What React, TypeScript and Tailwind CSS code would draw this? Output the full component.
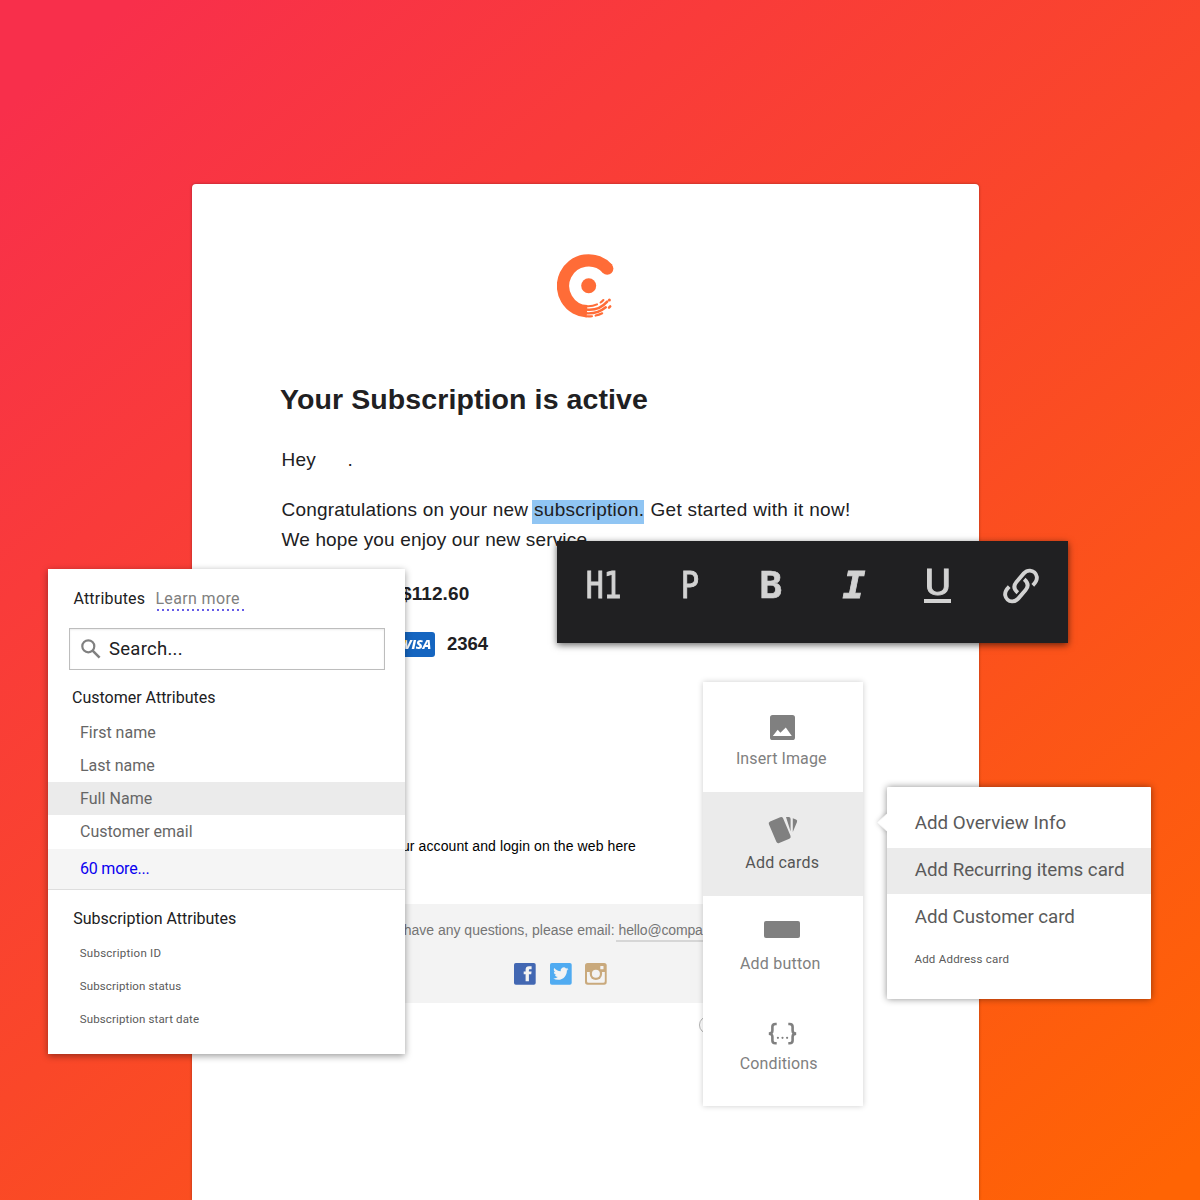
import React from "react";

function BrandMark() {
  return (
    <svg width="57" height="64" viewBox="0 0 57 64" fill="none" stroke="#ff6c37" className="mx-auto block">
      <path d="M30 57.3A25.5 25.5 0 1 1 50.4 14.7" strokeWidth="12.4" />
      <circle cx="50.2" cy="14.6" r="6.2" fill="#ff6c37" stroke="none" />
      <circle cx="31.7" cy="31.7" r="7.5" fill="#ff6c37" stroke="none" />
      <g strokeWidth="2.1" strokeLinecap="round">
        <path d="M28 52A20.6 20.6 0 0 0 40 50.4" />
        <path d="M43.6 48.5A20.6 20.6 0 0 0 46.4 46" />
        <path d="M29 55.6A24.2 24.2 0 0 0 50.2 47.6" strokeWidth="2.5" />
        <path d="M52.4 46v0.1" strokeWidth="3" />
        <path d="M29 59.3A27.6 27.6 0 0 0 48.8 53.2" strokeWidth="2.4" />
        <path d="M52 53.6l1.2-1.2" strokeWidth="2.5" />
        <path d="M29 62.3A30.6 30.6 0 0 0 35 62.2" />
        <path d="M38.6 61.6A30.6 30.6 0 0 0 45.2 59.3" />
      </g>
    </svg>
  );
}

function SearchIcon() {
  return (
    <svg width="20" height="20" viewBox="0 0 20 20" fill="none" stroke="#808080" strokeWidth="2.2">
      <circle cx="7.3" cy="7.3" r="6" />
      <path d="M11.6 11.6L18.6 18.6" strokeWidth="2.6" />
    </svg>
  );
}

function LinkIcon() {
  return (
    <svg width="40" height="40" viewBox="0 0 40 40" fill="none" stroke="#d2d2d2" strokeWidth="3.9">
      <path d="M8.2 20.6C5.6 23.2 3.6 25.4 4.2 29.2C4.8 32.6 7.6 35.2 11 35.4C13.6 35.5 15.6 34.4 17.2 32.6L24.6 24C27.6 20.4 27.2 16.6 23.2 13.2" />
      <path d="M31.8 19.4C34.4 16.8 36.4 14.6 35.8 10.8C35.2 7.4 32.4 4.8 29 4.6C26.4 4.5 24.4 5.6 22.8 7.4L15.4 16C12.4 19.6 12.8 23.4 16.8 26.8" />
    </svg>
  );
}

function ImageIcon() {
  return (
    <svg width="25" height="25" viewBox="0 0 25 25">
      <rect width="25" height="25" rx="2.6" fill="#808080" />
      <path d="M2.8 21L7.7 14.7L10.4 17.8L15.8 12.6L21.8 21Z" fill="#fff" />
    </svg>
  );
}

function CardsIcon() {
  return (
    <svg width="30" height="28" viewBox="0 0 30 28" fill="#808080">
      <rect x="4" y="2.4" width="15.4" height="23.4" rx="2.2" transform="rotate(-23 11.7 14.1)" />
      <path d="M18 0.9h2.4a2 2 0 0 1 2.2 2v12.6z" />
      <path d="M24.8 2.3l3.2 1.3a1.9 1.9 0 0 1 1 2.5L24.8 16z" />
    </svg>
  );
}

function BracesIcon() {
  return (
    <svg width="29" height="23" viewBox="0 0 29 23" fill="none" stroke="#808080" strokeWidth="2.6">
      <path d="M8.7 2H7.3C5.4 2 4.4 3 4.4 4.8V8.4C4.4 10.4 3.2 11.6 0.8 11.6C3.2 11.6 4.4 12.8 4.4 14.8V18.4C4.4 20.2 5.4 21.2 7.3 21.2H8.7" />
      <path d="M20.3 2H21.7C23.6 2 24.6 3 24.6 4.8V8.4C24.6 10.4 25.8 11.6 28.2 11.6C25.8 11.6 24.6 12.8 24.6 14.8V18.4C24.6 20.2 23.6 21.2 21.7 21.2H20.3" />
      <g fill="#808080" stroke="none">
        <circle cx="9.9" cy="15.8" r="1.1" />
        <circle cx="14.5" cy="15.8" r="1.1" />
        <circle cx="19.1" cy="15.8" r="1.1" />
      </g>
    </svg>
  );
}

function FacebookIcon() {
  return (
    <svg width="22" height="22" viewBox="0 0 22 22">
      <rect width="21.7" height="21.7" rx="1.8" fill="#4267b2" />
      <path d="M11.6 18.2v-6.9h-1.9V8.5h1.9V6.6c0-2.1 1.2-3.3 3.4-3.3h2.6v2.9H16c-.9 0-1.1.4-1.1 1.1v1.2h2.7l-.4 2.8h-2.3v6.9z" fill="#f3f3f3" />
    </svg>
  );
}

function TwitterIcon() {
  return (
    <svg width="22" height="22" viewBox="0 0 22 22">
      <rect width="21.7" height="21.7" rx="1.8" fill="#50abf1" />
      <g transform="translate(3.2 3) scale(0.635)">
        <path
          fill="#f3f3f3"
          d="M23.95 4.57a10 10 0 0 1-2.82.77 4.96 4.96 0 0 0 2.16-2.72c-.95.55-2 .96-3.12 1.18a4.92 4.92 0 0 0-8.38 4.48C7.69 8.1 4.07 6.13 1.64 3.16a4.82 4.82 0 0 0-.67 2.48c0 1.71.87 3.21 2.19 4.1a4.9 4.9 0 0 1-2.23-.62v.06a4.92 4.92 0 0 0 3.95 4.83 5 5 0 0 1-2.21.08 4.94 4.94 0 0 0 4.6 3.42A9.87 9.87 0 0 1 0 19.54a14 14 0 0 0 7.55 2.21c9.05 0 14-7.5 14-13.98 0-.21 0-.42-.02-.63a9.94 9.94 0 0 0 2.46-2.55z"
        />
      </g>
    </svg>
  );
}

function InstagramIcon() {
  return (
    <svg width="22" height="22" viewBox="0 0 22 22">
      <rect width="21.7" height="21.7" rx="2.6" fill="#c9a97c" />
      <path d="M2 9H5V11H17V9H19.8V18.2a1.5 1.5 0 0 1-1.5 1.5H3.5A1.5 1.5 0 0 1 2 18.2Z" fill="#f3f3f3" />
      <circle cx="10.9" cy="10.8" r="6.2" fill="#c9a97c" />
      <circle cx="10.9" cy="10.8" r="4" fill="#f3f3f3" />
      <rect x="15.3" y="3" width="3.2" height="3.2" rx="0.5" fill="#f3f3f3" />
    </svg>
  );
}

function EmailPreview() {
  return (
    <main className="ml-[192px] mt-[184px] h-[1016px] w-[787px] rounded-t-[4px] bg-white pt-[70px] font-['Liberation_Sans',Arial,sans-serif] text-[19px] leading-[30px] text-[#202022] shadow-[0_0_3px_rgba(0,0,0,0.35)]">
      <BrandMark />
      <h1 className="ml-[88px] mt-[63px] text-[28.5px] font-bold leading-[36px] tracking-[0.1px]">Your Subscription is active</h1>
      <p className="ml-[89.5px] mt-[28px] flex">
        <span className="w-[66px] tracking-[0.2px]">Hey</span>
        <span>.</span>
      </p>
      <div className="ml-[89.5px] mt-[20px] whitespace-nowrap">
        <p className="flex">
          <span className="w-[250.5px] tracking-[0.18px]">Congratulations on your new</span>
          <mark className="mt-[5px] h-[24px] w-[112px] bg-[#90c5f3] pl-[2px] leading-[19px] tracking-[0.28px] text-[#202022]">subscription.</mark>
          <span className="ml-[6.5px] tracking-[0.28px]">Get started with it now!</span>
        </p>
        <p className="tracking-[0.15px]">We hope you enjoy our new service.</p>
      </div>
      <p className="ml-[209px] mt-[24px] font-bold tracking-[0.1px]">$112.60</p>
      <div className="ml-[202px] mt-[20px] flex items-center gap-[12px]">
        <span className="flex h-[25px] w-[41px] items-center justify-end rounded-[3px] bg-[#1565c0] pr-[3px]">
          <span className="bg-[linear-gradient(110deg,#f9c440_4px,#fff_5px)] bg-clip-text pr-px font-['Open_Sans',sans-serif] text-[13px] font-extrabold italic leading-[20px] tracking-[-0.3px] text-transparent">
            VISA
          </span>
        </span>
        <span className="text-[18.5px] font-bold">2364</span>
      </div>
      <p className="ml-[195px] mt-[177px] text-[14px] leading-[20px] tracking-[0.1px] text-black">your account and login on the web here</p>
      <footer className="ml-[88px] mt-[48px] h-[99px] w-[560px] overflow-hidden bg-[#f3f3f3] pt-[16px] text-[14px] leading-[20px] text-[#757575]">
        <p className="ml-[85.5px] flex whitespace-nowrap">
          If you have any questions, please email:
          <a className="ml-[1px] h-[22px] border-b-2 border-[#d6d6d6] pl-[3px] tracking-[-0.15px]">hello@company.com</a>
        </p>
        <div className="ml-[234px] mt-[21px] flex gap-[13.5px]">
          <FacebookIcon />
          <TwitterIcon />
          <InstagramIcon />
        </div>
      </footer>
      <div className="ml-[507px] mt-[13px] size-[18px] rounded-full border border-[#b5b5b5]" />
    </main>
  );
}

function FormatToolbar() {
  return (
    <div className="absolute left-[557px] top-[540.5px] grid h-[102.5px] w-[511px] grid-cols-6 bg-[#202022] px-[5px] pt-[24px] text-[#d2d2d2] shadow-[0_2px_7px_rgba(0,0,0,0.6)]">
      <div className="flex h-[42px] items-center justify-center">
        <span className="scale-x-[0.82] font-['DejaVu_Sans_Mono',monospace] text-[36.5px] leading-[40px] tracking-[-0.5px] [-webkit-text-stroke:1px_#d2d2d2]">H1</span>
      </div>
      <div className="flex h-[42px] items-center justify-center pl-[5px]">
        <span className="scale-x-[0.84] font-['DejaVu_Sans_Mono',monospace] text-[36.5px] leading-[40px] [-webkit-text-stroke:1px_#d2d2d2]">P</span>
      </div>
      <div className="flex h-[42px] items-center justify-center">
        <span className="scale-x-[1.04] font-['DejaVu_Sans_Mono',monospace] text-[36.5px] font-bold leading-[40px] [-webkit-text-stroke:0.6px_#d2d2d2]">B</span>
      </div>
      <div className="flex h-[42px] items-center justify-center">
        <span className="scale-x-[1.04] font-['DejaVu_Sans_Mono',monospace] text-[36.5px] font-bold italic leading-[40px] [-webkit-text-stroke:0.8px_#d2d2d2]">I</span>
      </div>
      <div className="flex h-[40px] items-start justify-center">
        <span className="h-[38px] w-[27px] border-b-4 border-[#d2d2d2] text-center font-['Roboto',sans-serif] text-[36.5px] font-normal leading-[35px]">
          <span className="-mx-2 inline-block scale-x-110 [-webkit-text-stroke:0.9px_#d2d2d2]">U</span>
        </span>
      </div>
      <div className="flex h-[42px] items-center justify-center">
        <LinkIcon />
      </div>
    </div>
  );
}

function AttributesPanel() {
  return (
    <aside className="absolute left-[48.4px] top-[569px] h-[485px] w-[357px] bg-white pt-[18px] font-['Roboto',sans-serif] text-[16px] leading-[24px] text-[#202022] shadow-[0_2px_7px_rgba(0,0,0,0.4)]">
      <header className="ml-[25px] flex h-[41px]">
        <span className="w-[83px] tracking-[0.2px]">Attributes</span>
        <a className="text-[#808080]">
          <span className="-ml-[1px] block h-[22px] pr-[3px] tracking-[0.35px]">Learn more</span>
          <span className="ml-[0.6px] block h-[2px] w-[88px] bg-[repeating-linear-gradient(90deg,#665ce8_0,#665ce8_2px,transparent_2px,transparent_5px)]" />
        </a>
      </header>
      <div className="ml-[20.2px] flex h-[42px] w-[316.5px] items-center border border-[#bdbdbd] pl-[11px] text-[18.5px] shadow-[inset_0_1px_2px_rgba(0,0,0,0.08)]">
        <SearchIcon />
        <span className="ml-[8.5px] h-[40px] leading-[41px] tracking-[0.25px]">Search...</span>
      </div>
      <h2 className="ml-[23.6px] mt-[16px]">Customer Attributes</h2>
      <ul className="mt-[6px] leading-[33px] text-[#666]">
        <li className="pl-[31.6px]">First name</li>
        <li className="pl-[31.6px]">Last name</li>
        <li className="bg-[#ebebeb] pl-[31.6px] tracking-[0.05px]">Full Name</li>
        <li className="h-[34px] pl-[31.6px]">Customer email</li>
        <li className="h-[41px] border-b border-[#dedede] bg-[#f5f5f5] pl-[31.6px] leading-[39px] tracking-[-0.2px] text-[#0a00f0]">60 more...</li>
      </ul>
      <h2 className="ml-[24.8px] mt-[17px]">Subscription Attributes</h2>
      <ul className="ml-[31.4px] mt-[6px] text-[11.5px] leading-[33px] tracking-[0.13px] text-[#5a5a5a]">
        <li className="tracking-[0.25px]">Subscription ID</li>
        <li>Subscription status</li>
        <li>Subscription start date</li>
      </ul>
    </aside>
  );
}

function InsertMenu() {
  return (
    <nav className="absolute left-[702.5px] top-[682.4px] h-[424px] w-[160.5px] bg-white text-center font-['Roboto',sans-serif] text-[16px] leading-[24px] text-[#808080] shadow-[0_0_6px_rgba(0,0,0,0.2)]">
      <div className="flex h-[109.6px] flex-col items-center pt-[32.6px]">
        <ImageIcon />
        <span className="mr-[3px] mt-[7px] tracking-[0.1px]">Insert Image</span>
      </div>
      <div className="flex h-[104px] flex-col items-center bg-[#ebebeb] pt-[24px]">
        <CardsIcon />
        <span className="mr-px mt-[7px] tracking-[0.2px] text-[#555]">Add cards</span>
      </div>
      <div className="flex h-[102px] flex-col items-center pt-[25px]">
        <div className="mr-[2px] h-[17px] w-[36px] rounded-[2px] bg-[#808080]" />
        <span className="mr-[5px] mt-[14px] tracking-[0.22px]">Add button</span>
      </div>
      <div className="flex flex-col items-center pt-[24px]">
        <BracesIcon />
        <span className="mr-[8px] mt-[7.5px] tracking-[0.13px]">Conditions</span>
      </div>
    </nav>
  );
}

function CardsPopover() {
  return (
    <div className="absolute left-[886.6px] top-[787px] h-[212px] w-[264.8px] font-['Roboto',sans-serif] text-[18.75px] leading-[44px] text-[#5a5a5a]">
      <div className="absolute -left-[6.5px] top-[29px] size-[13px] rotate-45 bg-white shadow-[0_0_5px_rgba(0,0,0,0.25)]" />
      <div className="relative h-full rounded-[1px] bg-white pt-[14px] shadow-[0_0_7px_rgba(0,0,0,0.45)]">
        <div className="absolute -left-[8px] top-[27px] h-[17px] w-[10px] bg-white [clip-path:polygon(0_50%,80%_0,100%_0,100%_100%,80%_100%)]" />
        <p className="h-[47px] pl-[28.2px]">Add Overview Info</p>
        <p className="h-[46px] bg-[#ebebeb] pl-[28.2px] tracking-[-0.04px]">Add Recurring items card</p>
        <p className="h-[46px] pl-[28.2px] leading-[46px] tracking-[-0.06px]">Add Customer card</p>
        <p className="mt-[7px] pl-[27.8px] text-[11.5px] leading-[24px] tracking-[0.24px]">Add Address card</p>
      </div>
    </div>
  );
}

export default function App() {
  return (
    <div className="relative flow-root h-[1200px] w-[1200px] overflow-hidden bg-[linear-gradient(140deg,#f82f4b_5%,#fa4729_50%,#ff6404_98%)]">
      <EmailPreview />
      <InsertMenu />
      <CardsPopover />
      <FormatToolbar />
      <AttributesPanel />
    </div>
  );
}
